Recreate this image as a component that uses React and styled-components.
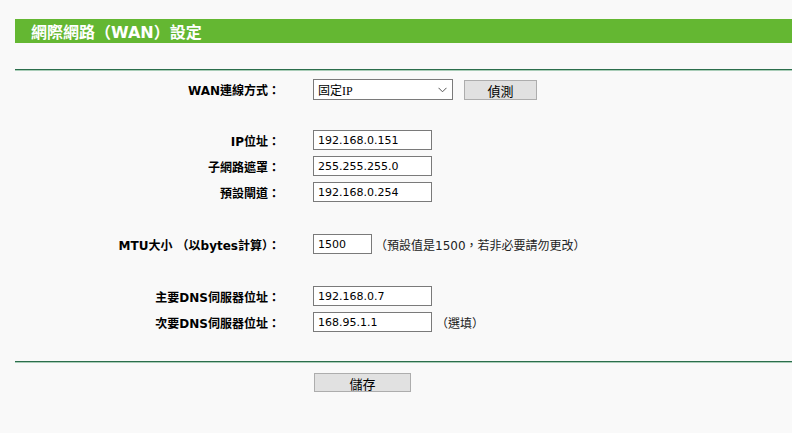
import React from "react";
import styled, { createGlobalStyle } from "styled-components";

const GlobalStyle = createGlobalStyle`
  html, body {
    margin: 0;
    padding: 0;
    background: #f9f9f9;
  }
  body {
    font-family: "DejaVu Sans", "Noto Sans CJK TC", sans-serif;
    color: #000;
  }
`;

const cjk = `"DejaVu Sans", "Noto Sans CJK TC", sans-serif`;

const Page = styled.div`
  padding: 19px 0 0 15px;
  width: 777px;
`;

const TitleBar = styled.div`
  height: 24px;
  background: #64b732;
  color: #fff;
  font: bold 16px ${cjk};
  display: flex;
  align-items: center;
  padding-left: 16px;
`;

const Rule = styled.div`
  height: 1px;
  background: #2c6e4c;
  border-bottom: 1px solid #a9cdb8;
  margin-top: ${({ top }) => top}px;
`;

const Form = styled.div`
  display: flex;
  flex-direction: column;
  padding-top: 8px;
`;

const Section = styled.div`
  display: flex;
  flex-direction: column;
  gap: 6px;
  margin-top: ${({ top }) => top || 0}px;
`;

const Row = styled.div`
  display: grid;
  grid-template-columns: 265px 1fr;
  column-gap: 33px;
  align-items: center;
  height: ${({ h }) => h || 20}px;
`;

const Label = styled.div`
  text-align: right;
  font: bold 12px ${cjk};
  color: #000;
  white-space: nowrap;
`;

const Field = styled.div`
  display: flex;
  align-items: center;
`;

const Input = styled.input`
  box-sizing: border-box;
  width: ${({ w }) => w}px;
  height: 20px;
  margin: 0;
  border: 1px solid #7a7a7a;
  background: #fff;
  padding: 0 0 0 4px;
  font: 11px ${cjk};
  color: #000;
  outline: none;
`;

const SelectBox = styled.div`
  box-sizing: border-box;
  width: 140px;
  height: 21px;
  border: 1px solid #7a7a7a;
  background: #fff;
  display: flex;
  align-items: center;
  justify-content: space-between;
  padding: 0 5px 0 4px;
  font: 12px "Liberation Serif", "Noto Sans CJK TC", serif;
`;

const Button = styled.button`
  box-sizing: border-box;
  width: ${({ w }) => w}px;
  height: ${({ h }) => h || 20}px;
  margin: 0 0 0 ${({ ml }) => ml || 0}px;
  padding: 0;
  border: 1px solid #adadad;
  background: #e1e1e1;
  font: 13px ${cjk};
  color: #000;
`;

const Note = styled.span`
  margin-left: ${({ ml }) => ml}px;
  font: 12px ${cjk};
  color: #222;
  white-space: nowrap;
`;

const Footer = styled.div`
  padding: 10px 0 0 299px;
`;

const Chevron = () => (
  <svg width="9" height="6" viewBox="0 0 9 6">
    <path d="M0.5 0.8 L4.5 4.8 L8.5 0.8" fill="none" stroke="#555" strokeWidth="1" />
  </svg>
);

export default function App() {
  return (
    <Page>
      <GlobalStyle />
      <TitleBar>網際網路（WAN）設定</TitleBar>
      <Rule top={26} />
      <Form>
        <Section>
          <Row h={21}>
            <Label>WAN連線方式：</Label>
            <Field>
              <SelectBox>
                <span>固定IP</span>
                <Chevron />
              </SelectBox>
              <Button w={73} ml={11}>偵測</Button>
            </Field>
          </Row>
        </Section>
        <Section top={30}>
          <Row>
            <Label>IP位址：</Label>
            <Field><Input w={119} defaultValue="192.168.0.151" /></Field>
          </Row>
          <Row>
            <Label>子網路遮罩：</Label>
            <Field><Input w={119} defaultValue="255.255.255.0" /></Field>
          </Row>
          <Row>
            <Label>預設閘道：</Label>
            <Field><Input w={119} defaultValue="192.168.0.254" /></Field>
          </Row>
        </Section>
        <Section top={32}>
          <Row>
            <Label>MTU大小 （以bytes計算）：</Label>
            <Field>
              <Input w={59} defaultValue="1500" />
              <Note ml={3}>（預設值是1500，若非必要請勿更改）</Note>
            </Field>
          </Row>
        </Section>
        <Section top={32}>
          <Row>
            <Label>主要DNS伺服器位址：</Label>
            <Field><Input w={119} defaultValue="192.168.0.7" /></Field>
          </Row>
          <Row>
            <Label>次要DNS伺服器位址：</Label>
            <Field>
              <Input w={119} defaultValue="168.95.1.1" />
              <Note ml={4}>（選填）</Note>
            </Field>
          </Row>
        </Section>
      </Form>
      <Rule top={29} />
      <Footer>
        <Button w={97} h={19}>儲存</Button>
      </Footer>
    </Page>
  );
}
